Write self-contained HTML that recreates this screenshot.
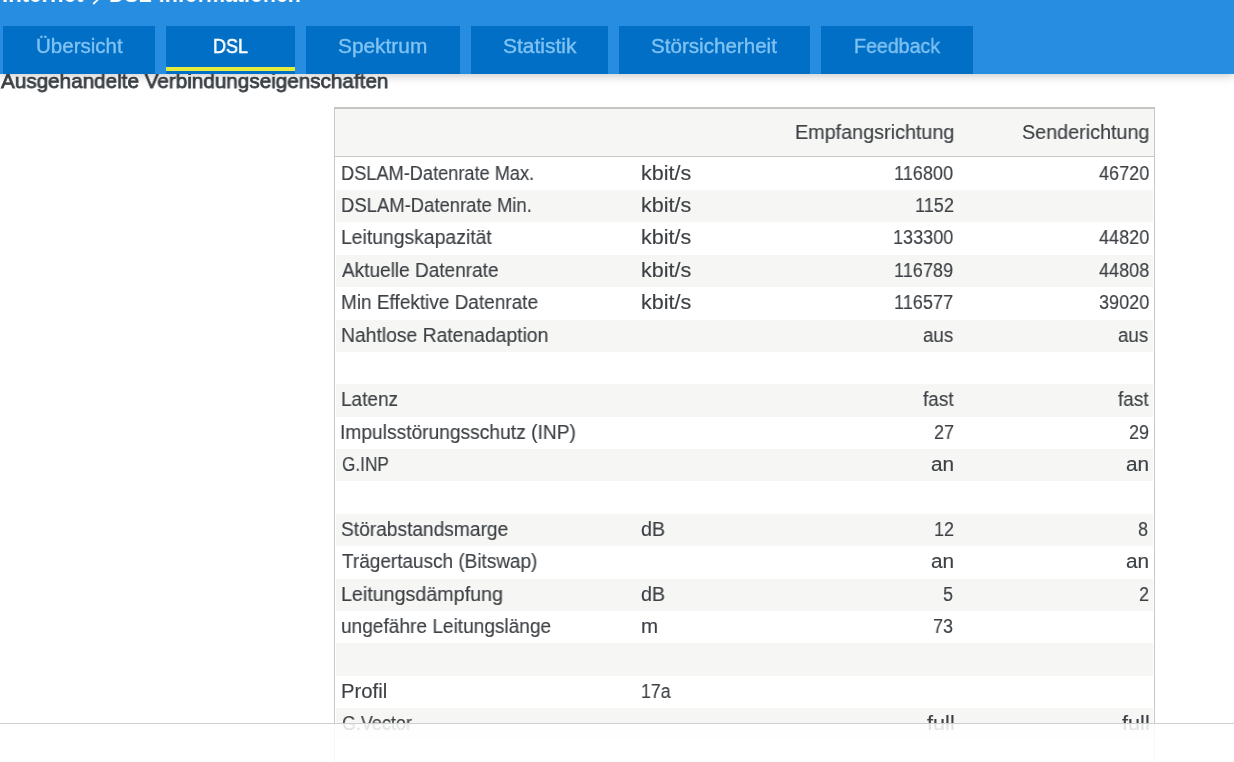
<!DOCTYPE html>
<html><head><meta charset="utf-8">
<style>
html,body{margin:0;padding:0;}
body{width:1234px;height:762px;overflow:hidden;position:relative;background:#fff;font-family:"Liberation Sans",sans-serif;}
.t{position:absolute;white-space:pre;transform-origin:0 0;will-change:transform;}
#hdr{position:absolute;left:0;top:0;width:1234px;height:74px;background:#278de0;box-shadow:0 1px 10px rgba(0,0,0,0.25);z-index:4;overflow:hidden;}
.tab{position:absolute;top:26px;height:48px;background:#006fc5;}
.uline{position:absolute;top:67px;height:4px;background:#e3eb3d;}
#tbl{position:absolute;left:334px;top:107px;width:819px;height:700px;border-left:1px solid #c8c8c6;border-right:1px solid #c8c8c6;border-top:2px solid #c4c4c1;}
#th{position:absolute;left:335px;top:109px;width:819px;height:47px;background:#f6f6f4;border-bottom:1px solid #c8c8c6;}
.g{position:absolute;left:336px;width:817px;height:32.375px;background:#f6f6f4;}
#foot{position:absolute;left:0;top:723px;width:1234px;height:39px;border-top:1px solid #cfcfcf;background:rgba(255,255,255,0.85);z-index:5;}
</style></head>
<body>
<div id="hdr">
<div class="tab" style="left:3px;width:152px"></div><div class="tab" style="left:166px;width:129px"></div><div class="uline" style="left:166px;width:129px"></div><div class="tab" style="left:306px;width:154px"></div><div class="tab" style="left:471px;width:137px"></div><div class="tab" style="left:619px;width:191px"></div><div class="tab" style="left:821px;width:152px"></div>
<div class="t" style="left:1.75px;top:-17.80px;font-size:24px;line-height:24px;font-weight:700;color:#ffffff;transform:scaleX(0.9244);">Internet</div>
<div class="t" style="left:109.32px;top:-17.80px;font-size:24px;line-height:24px;font-weight:700;color:#ffffff;transform:scaleX(0.8883);">DSL-Informationen</div>
<div class="t" style="left:35.67px;top:35.90px;font-size:20px;line-height:20px;font-weight:400;color:#80c3f3;transform:scaleX(1.0262);-webkit-text-stroke:0.35px #80c3f3;">Übersicht</div>
<div class="t" style="left:213.10px;top:35.90px;font-size:20px;line-height:20px;font-weight:400;color:#ffffff;transform:scaleX(0.9000);-webkit-text-stroke:0.5px #ffffff;">DSL</div>
<div class="t" style="left:338.16px;top:35.90px;font-size:20px;line-height:20px;font-weight:400;color:#80c3f3;transform:scaleX(1.0429);-webkit-text-stroke:0.35px #80c3f3;">Spektrum</div>
<div class="t" style="left:502.55px;top:35.90px;font-size:20px;line-height:20px;font-weight:400;color:#80c3f3;transform:scaleX(1.0493);-webkit-text-stroke:0.35px #80c3f3;">Statistik</div>
<div class="t" style="left:651.37px;top:35.90px;font-size:20px;line-height:20px;font-weight:400;color:#80c3f3;transform:scaleX(1.0295);-webkit-text-stroke:0.35px #80c3f3;">Störsicherheit</div>
<div class="t" style="left:853.92px;top:35.90px;font-size:20px;line-height:20px;font-weight:400;color:#80c3f3;transform:scaleX(0.9805);-webkit-text-stroke:0.35px #80c3f3;">Feedback</div>
<svg style="position:absolute;left:0;top:0" width="120" height="10"><path d="M88 -6 L97.6 -0.2 L93.2 4" stroke="#fff" stroke-width="1.8" fill="none"/></svg>
</div>
<div id="tbl"></div>
<div id="th"></div>
<div class="g" style="top:190.000px"></div><div class="g" style="top:254.750px"></div><div class="g" style="top:319.500px"></div><div class="g" style="top:384.250px"></div><div class="g" style="top:449.000px"></div><div class="g" style="top:513.750px"></div><div class="g" style="top:578.500px"></div><div class="g" style="top:643.250px"></div><div class="g" style="top:708.000px"></div>
<div class="t" style="left:1.00px;top:69.60px;font-size:21px;line-height:21px;font-weight:400;color:#3b4045;transform:scaleX(0.9845);-webkit-text-stroke:0.75px #3b4045;">Ausgehandelte Verbindungseigenschaften</div>
<div class="t" style="left:795.21px;top:122.20px;font-size:20px;line-height:20px;font-weight:400;color:#3d4145;transform:scaleX(0.9887);-webkit-text-stroke:0.15px #3d4145;">Empfangsrichtung</div>
<div class="t" style="left:1021.81px;top:122.20px;font-size:20px;line-height:20px;font-weight:400;color:#3d4145;transform:scaleX(0.9882);-webkit-text-stroke:0.15px #3d4145;">Senderichtung</div>
<div class="t" style="left:341.49px;top:162.72px;font-size:20px;line-height:20px;font-weight:400;color:#3d4145;transform:scaleX(0.9100);-webkit-text-stroke:0.15px #3d4145;">DSLAM-Datenrate Max.</div>
<div class="t" style="left:641.12px;top:162.72px;font-size:20px;line-height:20px;font-weight:400;color:#3d4145;transform:scaleX(1.0756);-webkit-text-stroke:0.15px #3d4145;">kbit/s</div>
<div class="t" style="left:894.24px;top:162.72px;font-size:20px;line-height:20px;font-weight:400;color:#3d4145;transform:scaleX(0.9040);-webkit-text-stroke:0.15px #3d4145;">116800</div>
<div class="t" style="left:1098.58px;top:162.72px;font-size:20px;line-height:20px;font-weight:400;color:#3d4145;transform:scaleX(0.9040);-webkit-text-stroke:0.15px #3d4145;">46720</div>
<div class="t" style="left:341.48px;top:195.10px;font-size:20px;line-height:20px;font-weight:400;color:#3d4145;transform:scaleX(0.9230);-webkit-text-stroke:0.15px #3d4145;">DSLAM-Datenrate Min.</div>
<div class="t" style="left:641.12px;top:195.10px;font-size:20px;line-height:20px;font-weight:400;color:#3d4145;transform:scaleX(1.0756);-webkit-text-stroke:0.15px #3d4145;">kbit/s</div>
<div class="t" style="left:915.03px;top:195.10px;font-size:20px;line-height:20px;font-weight:400;color:#3d4145;transform:scaleX(0.9040);-webkit-text-stroke:0.15px #3d4145;">1152</div>
<div class="t" style="left:341.43px;top:227.47px;font-size:20px;line-height:20px;font-weight:400;color:#3d4145;transform:scaleX(0.9684);-webkit-text-stroke:0.15px #3d4145;">Leitungskapazität</div>
<div class="t" style="left:641.12px;top:227.47px;font-size:20px;line-height:20px;font-weight:400;color:#3d4145;transform:scaleX(1.0756);-webkit-text-stroke:0.15px #3d4145;">kbit/s</div>
<div class="t" style="left:893.34px;top:227.47px;font-size:20px;line-height:20px;font-weight:400;color:#3d4145;transform:scaleX(0.9040);-webkit-text-stroke:0.15px #3d4145;">133300</div>
<div class="t" style="left:1098.58px;top:227.47px;font-size:20px;line-height:20px;font-weight:400;color:#3d4145;transform:scaleX(0.9040);-webkit-text-stroke:0.15px #3d4145;">44820</div>
<div class="t" style="left:342.40px;top:259.85px;font-size:20px;line-height:20px;font-weight:400;color:#3d4145;transform:scaleX(0.9512);-webkit-text-stroke:0.15px #3d4145;">Aktuelle Datenrate</div>
<div class="t" style="left:641.12px;top:259.85px;font-size:20px;line-height:20px;font-weight:400;color:#3d4145;transform:scaleX(1.0756);-webkit-text-stroke:0.15px #3d4145;">kbit/s</div>
<div class="t" style="left:894.24px;top:259.85px;font-size:20px;line-height:20px;font-weight:400;color:#3d4145;transform:scaleX(0.9040);-webkit-text-stroke:0.15px #3d4145;">116789</div>
<div class="t" style="left:1098.58px;top:259.85px;font-size:20px;line-height:20px;font-weight:400;color:#3d4145;transform:scaleX(0.9040);-webkit-text-stroke:0.15px #3d4145;">44808</div>
<div class="t" style="left:341.45px;top:292.23px;font-size:20px;line-height:20px;font-weight:400;color:#3d4145;transform:scaleX(0.9495);-webkit-text-stroke:0.15px #3d4145;">Min Effektive Datenrate</div>
<div class="t" style="left:641.12px;top:292.23px;font-size:20px;line-height:20px;font-weight:400;color:#3d4145;transform:scaleX(1.0756);-webkit-text-stroke:0.15px #3d4145;">kbit/s</div>
<div class="t" style="left:894.24px;top:292.23px;font-size:20px;line-height:20px;font-weight:400;color:#3d4145;transform:scaleX(0.9040);-webkit-text-stroke:0.15px #3d4145;">116577</div>
<div class="t" style="left:1098.58px;top:292.23px;font-size:20px;line-height:20px;font-weight:400;color:#3d4145;transform:scaleX(0.9040);-webkit-text-stroke:0.15px #3d4145;">39020</div>
<div class="t" style="left:341.43px;top:324.60px;font-size:20px;line-height:20px;font-weight:400;color:#3d4145;transform:scaleX(0.9662);-webkit-text-stroke:0.15px #3d4145;">Nahtlose Ratenadaption</div>
<div class="t" style="left:922.96px;top:324.60px;font-size:20px;line-height:20px;font-weight:400;color:#3d4145;transform:scaleX(0.9387);-webkit-text-stroke:0.15px #3d4145;">aus</div>
<div class="t" style="left:1118.26px;top:324.60px;font-size:20px;line-height:20px;font-weight:400;color:#3d4145;transform:scaleX(0.9387);-webkit-text-stroke:0.15px #3d4145;">aus</div>
<div class="t" style="left:341.45px;top:389.35px;font-size:20px;line-height:20px;font-weight:400;color:#3d4145;transform:scaleX(0.9500);-webkit-text-stroke:0.15px #3d4145;">Latenz</div>
<div class="t" style="left:922.70px;top:389.35px;font-size:20px;line-height:20px;font-weight:400;color:#3d4145;transform:scaleX(0.9469);-webkit-text-stroke:0.15px #3d4145;">fast</div>
<div class="t" style="left:1118.00px;top:389.35px;font-size:20px;line-height:20px;font-weight:400;color:#3d4145;transform:scaleX(0.9469);-webkit-text-stroke:0.15px #3d4145;">fast</div>
<div class="t" style="left:340.48px;top:421.73px;font-size:20px;line-height:20px;font-weight:400;color:#3d4145;transform:scaleX(0.9601);-webkit-text-stroke:0.15px #3d4145;">Impulsstörungsschutz (INP)</div>
<div class="t" style="left:934.02px;top:421.73px;font-size:20px;line-height:20px;font-weight:400;color:#3d4145;transform:scaleX(0.9040);-webkit-text-stroke:0.15px #3d4145;">27</div>
<div class="t" style="left:1129.32px;top:421.73px;font-size:20px;line-height:20px;font-weight:400;color:#3d4145;transform:scaleX(0.9040);-webkit-text-stroke:0.15px #3d4145;">29</div>
<div class="t" style="left:341.54px;top:454.10px;font-size:20px;line-height:20px;font-weight:400;color:#3d4145;transform:scaleX(0.8604);-webkit-text-stroke:0.15px #3d4145;">G.INP</div>
<div class="t" style="left:931.16px;top:454.10px;font-size:20px;line-height:20px;font-weight:400;color:#3d4145;transform:scaleX(1.0400);-webkit-text-stroke:0.15px #3d4145;">an</div>
<div class="t" style="left:1126.46px;top:454.10px;font-size:20px;line-height:20px;font-weight:400;color:#3d4145;transform:scaleX(1.0400);-webkit-text-stroke:0.15px #3d4145;">an</div>
<div class="t" style="left:341.44px;top:518.85px;font-size:20px;line-height:20px;font-weight:400;color:#3d4145;transform:scaleX(0.9578);-webkit-text-stroke:0.15px #3d4145;">Störabstandsmarge</div>
<div class="t" style="left:641.21px;top:518.85px;font-size:20px;line-height:20px;font-weight:400;color:#3d4145;transform:scaleX(0.9870);-webkit-text-stroke:0.15px #3d4145;">dB</div>
<div class="t" style="left:934.02px;top:518.85px;font-size:20px;line-height:20px;font-weight:400;color:#3d4145;transform:scaleX(0.9040);-webkit-text-stroke:0.15px #3d4145;">12</div>
<div class="t" style="left:1138.36px;top:518.85px;font-size:20px;line-height:20px;font-weight:400;color:#3d4145;transform:scaleX(0.9040);-webkit-text-stroke:0.15px #3d4145;">8</div>
<div class="t" style="left:342.40px;top:551.23px;font-size:20px;line-height:20px;font-weight:400;color:#3d4145;transform:scaleX(0.9483);-webkit-text-stroke:0.15px #3d4145;">Trägertausch (Bitswap)</div>
<div class="t" style="left:931.16px;top:551.23px;font-size:20px;line-height:20px;font-weight:400;color:#3d4145;transform:scaleX(1.0400);-webkit-text-stroke:0.15px #3d4145;">an</div>
<div class="t" style="left:1126.46px;top:551.23px;font-size:20px;line-height:20px;font-weight:400;color:#3d4145;transform:scaleX(1.0400);-webkit-text-stroke:0.15px #3d4145;">an</div>
<div class="t" style="left:341.42px;top:583.60px;font-size:20px;line-height:20px;font-weight:400;color:#3d4145;transform:scaleX(0.9840);-webkit-text-stroke:0.15px #3d4145;">Leitungsdämpfung</div>
<div class="t" style="left:641.21px;top:583.60px;font-size:20px;line-height:20px;font-weight:400;color:#3d4145;transform:scaleX(0.9870);-webkit-text-stroke:0.15px #3d4145;">dB</div>
<div class="t" style="left:943.06px;top:583.60px;font-size:20px;line-height:20px;font-weight:400;color:#3d4145;transform:scaleX(0.9040);-webkit-text-stroke:0.15px #3d4145;">5</div>
<div class="t" style="left:1139.26px;top:583.60px;font-size:20px;line-height:20px;font-weight:400;color:#3d4145;transform:scaleX(0.9040);-webkit-text-stroke:0.15px #3d4145;">2</div>
<div class="t" style="left:341.45px;top:615.98px;font-size:20px;line-height:20px;font-weight:400;color:#3d4145;transform:scaleX(0.9543);-webkit-text-stroke:0.15px #3d4145;">ungefähre Leitungslänge</div>
<div class="t" style="left:641.17px;top:615.98px;font-size:20px;line-height:20px;font-weight:400;color:#3d4145;transform:scaleX(1.0267);-webkit-text-stroke:0.15px #3d4145;">m</div>
<div class="t" style="left:933.11px;top:615.98px;font-size:20px;line-height:20px;font-weight:400;color:#3d4145;transform:scaleX(0.9040);-webkit-text-stroke:0.15px #3d4145;">73</div>
<div class="t" style="left:341.39px;top:680.73px;font-size:20px;line-height:20px;font-weight:400;color:#3d4145;transform:scaleX(1.0140);-webkit-text-stroke:0.15px #3d4145;">Profil</div>
<div class="t" style="left:641.31px;top:680.73px;font-size:20px;line-height:20px;font-weight:400;color:#3d4145;transform:scaleX(0.8879);-webkit-text-stroke:0.15px #3d4145;">17a</div>
<div class="t" style="left:341.50px;top:713.10px;font-size:20px;line-height:20px;font-weight:400;color:#3d4145;transform:scaleX(0.8974);-webkit-text-stroke:0.15px #3d4145;">G.Vector</div>
<div class="t" style="left:927.00px;top:713.10px;font-size:20px;line-height:20px;font-weight:400;color:#3d4145;transform:scaleX(1.0833);-webkit-text-stroke:0.15px #3d4145;">full</div>
<div class="t" style="left:1122.30px;top:713.10px;font-size:20px;line-height:20px;font-weight:400;color:#3d4145;transform:scaleX(1.0833);-webkit-text-stroke:0.15px #3d4145;">full</div>
<div id="foot"></div>
</body></html>
